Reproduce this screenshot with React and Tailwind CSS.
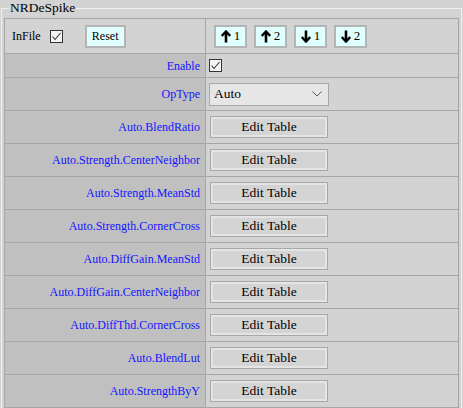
import React from "react";

const Check = ({ className = "" }) => (
  <svg width="13" height="13" viewBox="0 0 13 13" className={className}>
    <rect x="0.5" y="0.5" width="12" height="12" fill="#f4f4f4" stroke="#333" />
    <polyline points="2.5,6.5 5,9.5 10.5,3" fill="none" stroke="#333" strokeWidth="1.1" />
  </svg>
);

const Arrow = ({ down }) => (
  <svg width="10" height="13" viewBox="0 0 10 13" className="mr-[3px]">
    <g transform={down ? "rotate(180 5 6.5)" : undefined}>
      <line x1="5" y1="12.5" x2="5" y2="2" stroke="#000" strokeWidth="2.6" />
      <polyline points="0.8,6 5,1.5 9.2,6" fill="none" stroke="#000" strokeWidth="2.4" />
    </g>
  </svg>
);

const CyanBtn = ({ children, w }) => (
  <div className={`flex h-[23px] items-center justify-center border-2 border-[#b4b4b4] bg-[#e0ffff] ${w}`}>
    {children}
  </div>
);

const EditBtn = () => (
  <div className="ml-[1px] w-[118px] h-[22px] border border-[#a8a8a8] bg-[#e4e4e4] p-[2px]">
    <div className="h-full bg-[#d4d4d4] flex items-center justify-center text-[13.5px] leading-none text-black">
      Edit Table
    </div>
  </div>
);

const rows = [
  "Auto.BlendRatio",
  "Auto.Strength.CenterNeighbor",
  "Auto.Strength.MeanStd",
  "Auto.Strength.CornerCross",
  "Auto.DiffGain.MeanStd",
  "Auto.DiffGain.CenterNeighbor",
  "Auto.DiffThd.CornerCross",
  "Auto.BlendLut",
  "Auto.StrengthByY",
];

const Label = ({ children, h }) => (
  <div
    className={`${h} bg-[#c0c0c0] border-r border-b border-[#a6a6a6] flex items-center justify-end pr-[5px] text-[12px] text-[#1414ff]`}
  >
    {children}
  </div>
);

const Value = ({ children, h }) => (
  <div className={`${h} bg-[#d3d3d3] border-b border-[#a6a6a6] flex items-center pl-[3px]`}>
    {children}
  </div>
);

export default function App() {
  return (
    <div
      className="w-[463px] h-[408px] overflow-hidden bg-[#d3d3d3] text-black"
      style={{ fontFamily: '"Liberation Serif", "Times New Roman", serif' }}
    >
      <fieldset className="ml-[1px] mr-[2px] border border-b-0 border-[#efefef] px-[2px] pb-0">
        <legend className="ml-[5px] text-[13.5px] leading-[16px] px-[1px]">NRDeSpike</legend>
        <div className="mt-[2px] border border-[#a6a6a6] grid grid-cols-[201px_252px]">
          {/* header row */}
          <div className="h-[35px] border-r border-b border-[#a6a6a6] flex items-center pl-[7px]">
            <span className="text-[12px]">InFile</span>
            <Check className="ml-[9px]" />
            <div className="ml-[22px]">
              <CyanBtn w="w-[41px]">
                <span className="text-[12px]">Reset</span>
              </CyanBtn>
            </div>
          </div>
          <div className="h-[35px] border-b border-[#a6a6a6] flex items-center pl-[8px] gap-[7px]">
            <CyanBtn w="w-[33px]">
              <Arrow />
              <span className="text-[13px]">1</span>
            </CyanBtn>
            <CyanBtn w="w-[33px]">
              <Arrow />
              <span className="text-[13px]">2</span>
            </CyanBtn>
            <CyanBtn w="w-[33px]">
              <Arrow down />
              <span className="text-[13px]">1</span>
            </CyanBtn>
            <CyanBtn w="w-[33px]">
              <Arrow down />
              <span className="text-[13px]">2</span>
            </CyanBtn>
          </div>

          <Label h="h-[24px]">Enable</Label>
          <Value h="h-[24px]">
            <Check />
          </Value>

          <Label h="h-[33px]">OpType</Label>
          <Value h="h-[33px]">
            <div className="w-[120px] h-[23px] border border-[#a8a8a8] bg-[#e6e6e6] flex items-center justify-between pl-[4px] pr-[6px]">
              <span className="text-[13.5px]">Auto</span>
              <svg width="10" height="6" viewBox="0 0 10 6">
                <polyline points="0.5,0.5 5,5 9.5,0.5" fill="none" stroke="#555" strokeWidth="1" />
              </svg>
            </div>
          </Value>

          {rows.map((r) => (
            <React.Fragment key={r}>
              <Label h="h-[33px]">{r}</Label>
              <Value h="h-[33px]">
                <EditBtn />
              </Value>
            </React.Fragment>
          ))}
        </div>
      </fieldset>
    </div>
  );
}
